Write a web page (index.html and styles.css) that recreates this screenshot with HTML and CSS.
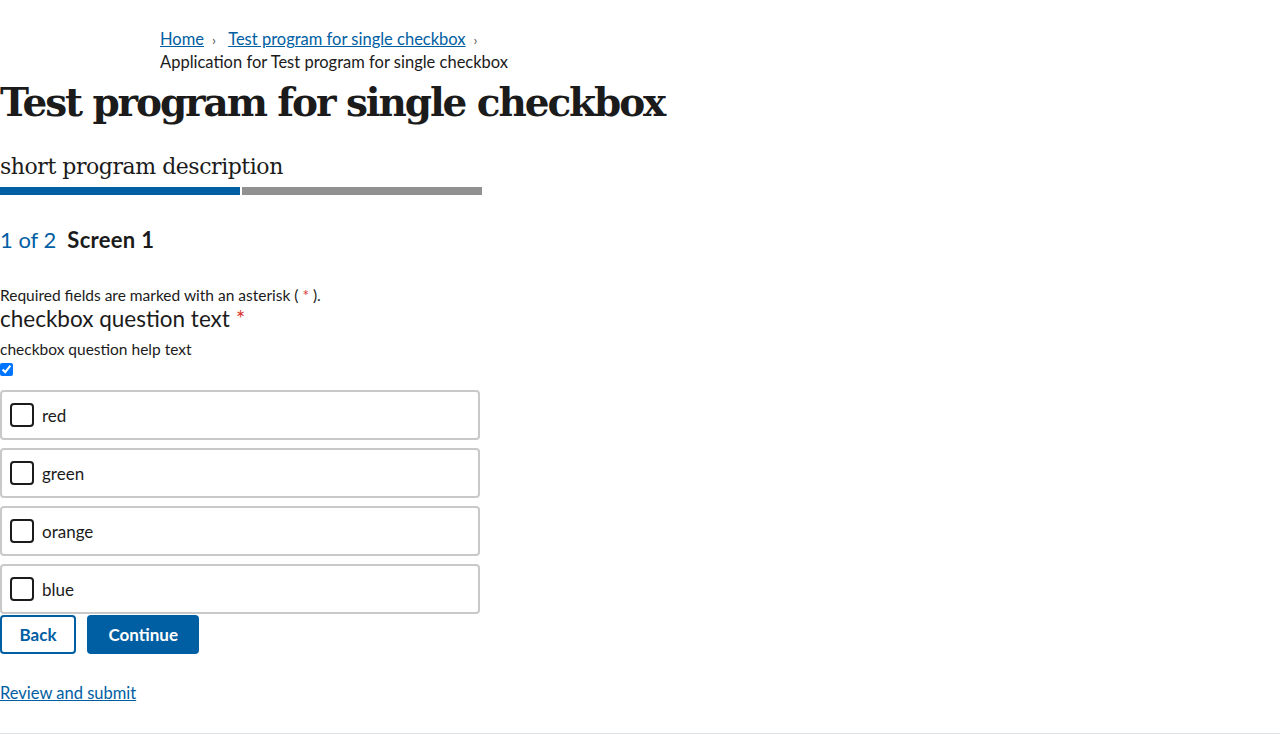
FILE: index.html
```
<!DOCTYPE html>
<html lang="en">
<head>
<meta charset="utf-8">
<title>Test program for single checkbox</title>
<link rel="stylesheet" href="styles.css">
</head>
<body>
<main class="page">
  <nav class="breadcrumb" aria-label="Breadcrumbs">
    <ol class="crumbs">
      <li class="crumb"><a href="#">Home</a><span class="sep">›</span></li>
      <li class="crumb"><a href="#">Test program for single checkbox</a><span class="sep">›</span></li>
      <li class="crumb current">Application for Test program for single checkbox</li>
    </ol>
  </nav>
  <h1 class="title">Test program for single checkbox</h1>
  <p class="desc">short program description</p>
  <div class="progress">
    <div class="seg done"></div>
    <div class="seg"></div>
  </div>
  <h2 class="step"><span class="count">1 of 2</span><span class="name">Screen 1</span></h2>
  <form class="form">
    <p class="req">Required fields are marked with an asterisk ( <span class="ast">*</span> ).</p>
    <fieldset class="q">
      <legend class="qtext">checkbox question text <span class="ast">*</span></legend>
      <p class="help">checkbox question help text</p>
      <input class="native" type="checkbox" checked>
      <div class="options">
        <label class="opt"><span class="box"></span><span>red</span></label>
        <label class="opt"><span class="box"></span><span>green</span></label>
        <label class="opt"><span class="box"></span><span>orange</span></label>
        <label class="opt"><span class="box"></span><span>blue</span></label>
      </div>
    </fieldset>
    <div class="actions">
      <button type="button" class="btn outline">Back</button>
      <button type="button" class="btn primary">Continue</button>
    </div>
  </form>
  <a class="review" href="#">Review and submit</a>
</main>
<footer class="footer"></footer>
</body>
</html>
```
FILE: styles.css
```
html, body { margin: 0; padding: 0; }
body {
  font-family: "Source Sans Pro", Lato, "Liberation Sans", sans-serif;
  color: #1b1b1b;
  background: #fff;
}
a { color: #005ea2; }
.page { padding-top: 28px; min-height: 705px; }
.breadcrumb { padding-left: 160px; width: 390px; }
.crumbs { list-style: none; margin: 0; padding: 0; font-size: 16.5px; line-height: 23px; }
.crumb { display: inline; }
.crumb .sep { display: inline-block; margin: 0 8px; color: #555; font-size: 14px; }
.crumb.current { display: block; }
.title {
  font-family: "DejaVu Serif", "Liberation Serif", serif;
  font-weight: bold;
  font-size: 39px;
  letter-spacing: -2.1px;
  line-height: 46px;
  margin: 5px 0 0;
}
.desc {
  font-family: "DejaVu Serif", "Liberation Serif", serif;
  font-size: 22px;
  letter-spacing: -0.45px;
  line-height: 30px;
  margin: 27px 0 0;
}
.progress { display: flex; gap: 2px; width: 482px; margin-top: 5px; }
.seg { flex: 1; height: 8px; background: #919191; }
.seg.done { background: #005ea2; }
.step { margin: 30px 0 0; font-size: 22px; line-height: 30px; font-weight: normal; display: flex; gap: 11px; }
.count { color: #005ea2; }
.name { font-weight: bold; letter-spacing: 0.3px; }
.form { margin-top: 30px; }
.req { margin: 0; font-size: 15.5px; line-height: 20px; }
.ast { color: #d83933; }
.q { border: 0; margin: 0; padding: 0; min-width: 0; }
.qtext { padding: 0; font-size: 22.5px; line-height: 28px; }
.help { margin: 6px 0 0; font-size: 15.5px; line-height: 20px; }
.native { margin: 4px 0 0; width: 13px; height: 13px; display: block; }
.options { display: flex; flex-direction: column; gap: 8px; width: 480px; margin-top: 14px; }
.opt {
  display: flex; align-items: center; gap: 8px;
  height: 50px; box-sizing: border-box;
  border: 2px solid #c9c9c9; border-radius: 4px;
  padding-left: 8px; font-size: 17px;
}
.box { width: 24px; height: 24px; box-sizing: border-box; border: 2px solid #1b1b1b; border-radius: 4px; background: #fff; }
.actions { display: flex; gap: 11px; margin-top: 1px; }
.btn {
  font-family: inherit; font-size: 17px; font-weight: bold;
  height: 39px; border-radius: 4px; padding: 0 18px; cursor: pointer;
}
.outline { background: #fff; color: #005ea2; border: 2px solid #005ea2; padding: 0 17.5px; }
.primary { background: #005ea2; color: #fff; border: 0; padding: 0 21.5px; }
.review { display: inline-block; margin-top: 27px; font-size: 16.5px; line-height: 24px; }
.footer { border-top: 1px solid #dfe1e2; height: 20px; }
```
